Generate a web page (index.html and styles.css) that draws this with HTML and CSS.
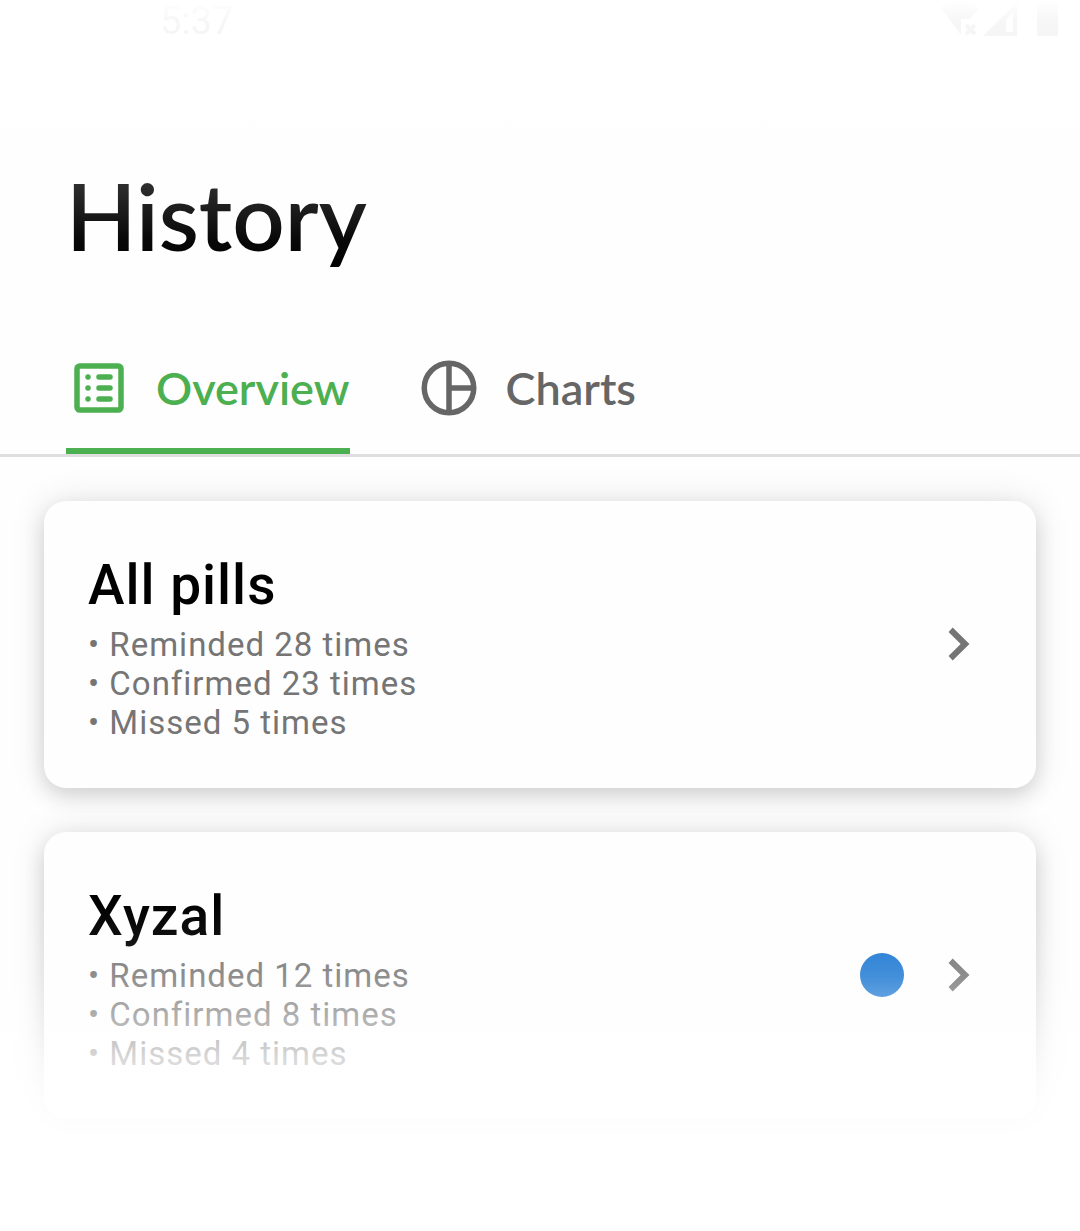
FILE: index.html
```html
<!DOCTYPE html>
<html lang="en">
<head>
<meta charset="utf-8">
<meta name="viewport" content="width=device-width, initial-scale=1">
<title>History</title>
<link rel="stylesheet" href="styles.css">
</head>
<body>
<div class="screen">
  <div class="status-bar">
    <time class="clock">5:37</time>
    <div class="status-icons">
      <svg class="wifi" viewBox="0 0 38 36" aria-hidden="true"><path d="M0 8C5 4 12 2 19 2s14 2 19 6l-9 11h-9v16z"/><path class="cross" d="M25 25l9 9m0-9l-9 9"/></svg>
      <svg class="signal" viewBox="0 0 34 36" aria-hidden="true"><path fill-rule="evenodd" d="M34 2v34H0zm-11 18v12h7V12z"/></svg>
      <svg class="battery" viewBox="0 0 21 36" aria-hidden="true"><path d="M6 1h9v3h4a2 2 0 0 1 2 2v28a2 2 0 0 1-2 2H2a2 2 0 0 1-2-2V6a2 2 0 0 1 2-2h4z"/></svg>
    </div>
  </div>
  <header class="header">
    <h1 class="page-title">History</h1>
  </header>
  <nav class="tabs" role="tablist" aria-label="History views">
    <button class="tab tab-active" type="button" role="tab" aria-selected="true">
      <svg class="tab-icon" viewBox="0 0 24 24" aria-hidden="true">
        <rect x="4" y="4" width="16" height="16" rx="1"/>
        <path class="round" d="M12 8h4M12 12h4M12 16h4M8 8h0M8 12h0M8 16h0"/>
      </svg>
      <span>Overview</span>
    </button>
    <button class="tab" type="button" role="tab" aria-selected="false">
      <svg class="tab-icon" viewBox="0 0 24 24" aria-hidden="true">
        <circle cx="12" cy="12" r="9"/><path d="M12 3v18M12 12h9"/>
      </svg>
      <span>Charts</span>
    </button>
  </nav>
  <main class="cards">
    <a class="card" href="#all">
      <div class="card-text">
        <h2 class="card-title">All pills</h2>
        <ul class="stats">
          <li>Reminded 28 times</li>
          <li>Confirmed 23 times</li>
          <li>Missed 5 times</li>
        </ul>
      </div>
      <svg class="chevron" viewBox="0 0 24 24" aria-hidden="true"><path d="M8.2 16.4L12.6 12 8.2 7.6 9.7 6l6.1 6-6.1 6z"/></svg>
    </a>
    <a class="card" href="#xyzal">
      <div class="card-text">
        <h2 class="card-title">Xyzal</h2>
        <ul class="stats">
          <li>Reminded 12 times</li>
          <li>Confirmed 8 times</li>
          <li>Missed 4 times</li>
        </ul>
      </div>
      <span class="pill-color"></span>
      <svg class="chevron" viewBox="0 0 24 24" aria-hidden="true"><path d="M8.2 16.4L12.6 12 8.2 7.6 9.7 6l6.1 6-6.1 6z"/></svg>
    </a>
  </main>
</div>
</body>
</html>
```
FILE: styles.css
```css
* { box-sizing: border-box; }

body {
  margin: 0;
  background: #fff;
  color: #000;
  font-family: Roboto, "Liberation Sans", sans-serif;
}

.screen {
  position: relative;
  min-height: 100vh;
  background: #fefefe;
}

/* White fades over the top and bottom of the screen */
.screen::before,
.screen::after {
  content: "";
  position: absolute;
  left: 0;
  right: 0;
  pointer-events: none;
}

.screen::before {
  top: 0;
  height: 270px;
  background: linear-gradient(#fff 0, rgba(255, 255, 255, .97) 20px, rgba(255, 255, 255, .96) 40px, rgba(255, 255, 255, .18) 184px, rgba(255, 255, 255, .03) 240px, rgba(255, 255, 255, 0));
}

.screen::after {
  bottom: 0;
  height: 331px;
  background: linear-gradient(rgba(255, 255, 255, 0), rgba(255, 255, 255, .06) 36px, rgba(255, 255, 255, .18) 76px, rgba(255, 255, 255, .42) 116px, rgba(255, 255, 255, .7) 156px, rgba(255, 255, 255, .92) 200px, #fff 260px);
}

.status-bar {
  display: flex;
  justify-content: space-between;
  height: 44px;
  padding: 0 22px 0 160px;
}

.clock {
  font-size: 38px;
  line-height: 42px;
}

.status-icons {
  display: flex;
}

.status-icons svg { height: 36px; }
.wifi { width: 38px; margin-right: 4px; }
.signal { width: 34px; margin-right: 20px; }
.battery { width: 21px; }
.cross { stroke: #000; stroke-width: 4px; }

.header {
  padding: 110px 66px 53px;
}

.page-title {
  margin: 0;
  font-family: Lato, "Liberation Sans", sans-serif;
  font-size: 92px;
  font-weight: 600;
  line-height: 124px;
}

.tabs {
  display: flex;
  gap: 66px;
  padding: 0 66px;
  border-bottom: 3px solid #dfdfdf;
}

.tab {
  display: flex;
  align-items: center;
  gap: 24px;
  padding: 24px 0 27px;
  border: 0;
  border-bottom: 6px solid transparent;
  background: none;
  color: #666;
  font-family: Lato, "Liberation Sans", sans-serif;
  font-size: 45px;
  font-weight: 600;
  line-height: 66px;
}

.tab-active {
  border-bottom-color: #4caf50;
  color: #4caf50;
}

.tab-icon {
  width: 66px;
  height: 66px;
  fill: none;
  stroke: currentColor;
  stroke-width: 2px;
}

.round { stroke-linecap: round; }

.cards {
  display: flex;
  flex-direction: column;
  gap: 44px;
  padding: 44px 44px 112px;
}

.card {
  display: flex;
  align-items: center;
  padding: 44px 44px 46px;
  border-radius: 22px;
  background: #fefefe;
  box-shadow: 0 8px 20px rgba(0, 0, 0, .13), 0 0 36px rgba(0, 0, 0, .1);
  color: inherit;
  text-decoration: none;
}

.card-text { flex: 1; }

.card-title {
  margin: 0;
  font-size: 55px;
  font-weight: 500;
  line-height: 80px;
  letter-spacing: 1px;
}

.stats {
  margin: 0;
  padding: 0;
  list-style: none;
  color: #757575;
  font-size: 33px;
  line-height: 39px;
  letter-spacing: 1px;
}

.stats li::before { content: "• "; }

.pill-color {
  width: 44px;
  height: 44px;
  margin-right: 22px;
  border-radius: 50%;
  background: #1976d2;
}

.chevron {
  width: 66px;
  height: 66px;
  fill: #757575;
}
```
